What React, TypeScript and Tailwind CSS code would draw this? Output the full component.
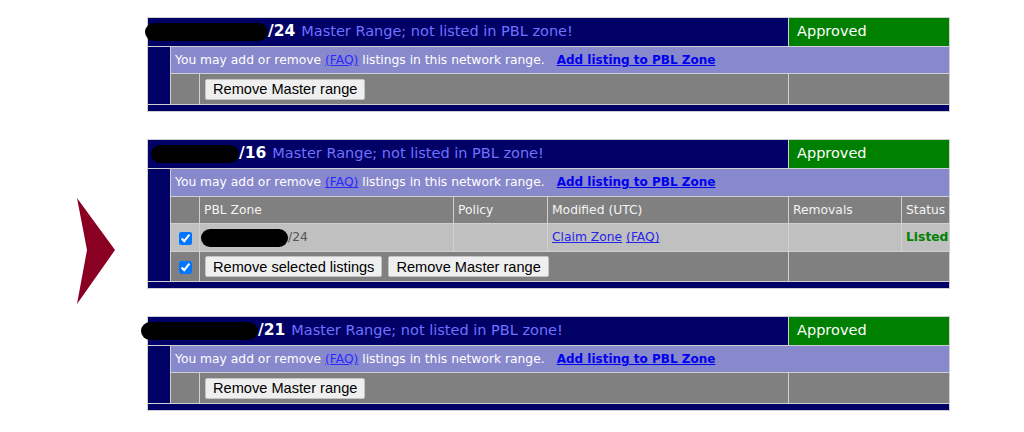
import React from "react";

const NAVY = "bg-[#000066]";

function Blob({ w, ml }: { w: number; ml: number }) {
  return (
    <span
      className="inline-block h-[18px] rounded-full bg-black align-middle"
      style={{ width: w, marginLeft: ml }}
    />
  );
}

function Btn({ children }: { children: React.ReactNode }) {
  return (
    <button className="h-[21px] px-[7px] text-[14.6px] leading-none text-black bg-[#efefef] border border-[#c4c4c4] rounded-[2px] font-['Liberation_Sans',Arial,sans-serif]">
      {children}
    </button>
  );
}

function Check() {
  return <input type="checkbox" defaultChecked className="w-[13px] h-[13px] accent-[#0075ff] align-middle m-0" />;
}

const cell = "border border-[#d0d0d0] p-0";

function MasterHeader({ prefix, blobW, blobMl, span, purpleH }: { prefix: string; blobW: number; blobMl: number; span: number; purpleH: string }) {
  return (
    <>
      <tr className="h-[29px]">
        <td colSpan={5} className={`${cell} ${NAVY} pl-[3px] text-[14.5px] whitespace-nowrap`}>
          <Blob w={blobW} ml={blobMl} />
          <span className="font-bold text-[15.5px] text-white">/{prefix}</span>
          <span className="text-[#7171ff] ml-[6px]">Master Range; not listed in PBL zone!</span>
        </td>
        <td colSpan={2} className={`${cell} bg-[#008000] text-white text-[14.5px] pl-[8px]`}>Approved</td>
      </tr>
      <tr className={purpleH}>
        <td rowSpan={span} className={`${cell} ${NAVY}`} />
        <td colSpan={6} className={`${cell} bg-[#8888cc] text-[12.3px] text-white pl-[4px] whitespace-nowrap`}>
          You may add or remove <a href="#" className="text-[#2a2aff] underline">(FAQ)</a> listings in this network range.
          <a href="#" className="ml-[12px] text-[12px] font-bold text-[#0000ee] underline">Add listing to PBL Zone</a>
        </td>
      </tr>
    </>
  );
}

function Cols() {
  return (
    <colgroup>
      <col className="w-[23px]" />
      <col className="w-[29px]" />
      <col className="w-[254px]" />
      <col className="w-[94px]" />
      <col className="w-[241px]" />
      <col className="w-[113px]" />
      <col className="w-[48px]" />
    </colgroup>
  );
}

function SimpleBlock({ prefix, blobW, blobMl }: { prefix: string; blobW: number; blobMl: number }) {
  return (
    <table className="w-[802px] table-fixed border-collapse">
      <Cols />
      <tbody>
        <MasterHeader prefix={prefix} blobW={blobW} blobMl={blobMl} span={2} purpleH="h-[27px]" />
        <tr className="h-[31px] bg-[#808080]">
          <td className={cell} />
          <td colSpan={3} className={`${cell} pl-[5px]`}>
            <Btn>Remove Master range</Btn>
          </td>
          <td colSpan={2} className={cell} />
        </tr>
        <tr className="h-[7px]">
          <td colSpan={7} className={`${cell} ${NAVY}`} />
        </tr>
      </tbody>
    </table>
  );
}

function ListingBlock() {
  const hd = `${cell} bg-[#808080] text-[#f4f4f4] text-[12.3px] pl-[4px]`;
  const dt = `${cell} bg-[#c0c0c0] text-[12.3px] pl-[4px]`;
  return (
    <table className="w-[802px] table-fixed border-collapse self-start">
      <Cols />
      <tbody>
        <MasterHeader prefix="16" blobW={88} blobMl={0} span={4} purpleH="h-[28px]" />
        <tr className="h-[27px]">
          <td className={`${cell} bg-[#808080]`} />
          <td className={hd}>PBL Zone</td>
          <td className={hd}>Policy</td>
          <td className={hd}>Modified (UTC)</td>
          <td className={hd}>Removals</td>
          <td className={hd}>Status</td>
        </tr>
        <tr className="h-[28px]">
          <td className={`${cell} bg-[#c0c0c0] text-center`}><Check /></td>
          <td className={`${dt} whitespace-nowrap`}>
            <Blob w={87} ml={-3} />
            <span className="text-[#555]">/24</span>
          </td>
          <td className={dt} />
          <td className={dt}>
            <a href="#" className="text-[#2424e8] underline">Claim Zone</a>{" "}
            <a href="#" className="text-[#2424e8] underline">(FAQ)</a>
          </td>
          <td className={dt} />
          <td className={`${dt} font-bold text-[#008000]`}>Listed</td>
        </tr>
        <tr className="h-[30px] bg-[#808080]">
          <td className={`${cell} text-center`}><Check /></td>
          <td colSpan={3} className={`${cell} pl-[5px]`}>
            <span className="inline-flex gap-[6px]">
              <Btn>Remove selected listings</Btn>
              <Btn>Remove Master range</Btn>
            </span>
          </td>
          <td colSpan={2} className={cell} />
        </tr>
        <tr className="h-[7px]">
          <td colSpan={7} className={`${cell} ${NAVY}`} />
        </tr>
      </tbody>
    </table>
  );
}

function Arrow() {
  return (
    <svg width="40" height="108" viewBox="0 0 40 108" className="mr-[32px] -mb-[20px]">
      <polygon points="2,1 40,53 2,107 12,53" fill="#8a0022" />
    </svg>
  );
}

export default function App() {
  return (
    <div className="w-[1024px] h-[432px] bg-white font-['DejaVu_Sans',Verdana,sans-serif] pt-[17px] flex flex-col gap-[27px]">
      <div className="flex">
        <div className="w-[147px] shrink-0" />
        <SimpleBlock prefix="24" blobW={123} blobMl={-6} />
      </div>
      <div className="flex items-start">
        <div className="w-[147px] shrink-0 flex items-start justify-end pt-[58px]">
          <Arrow />
        </div>
        <ListingBlock />
      </div>
      <div className="flex">
        <div className="w-[147px] shrink-0" />
        <SimpleBlock prefix="21" blobW={117} blobMl={-10} />
      </div>
    </div>
  );
}
